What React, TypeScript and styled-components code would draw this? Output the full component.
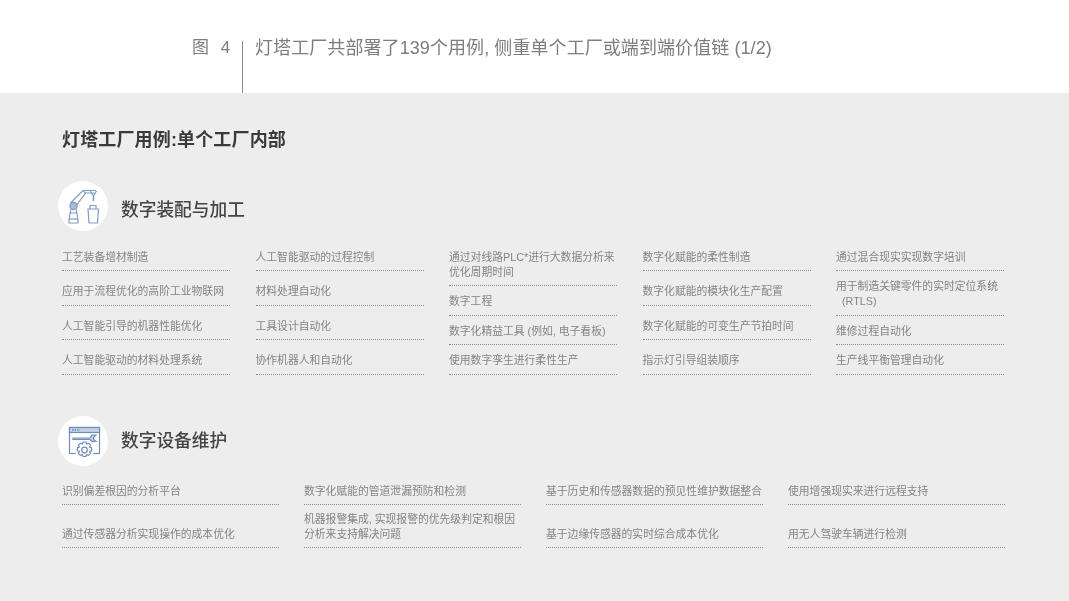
import styled, { createGlobalStyle } from "styled-components";

const GlobalStyle = createGlobalStyle`
  html, body {
    margin: 0;
    padding: 0;
    background: #ededed;
  }
  * {
    box-sizing: border-box;
  }
`;

const Page = styled.div`
  width: 1069px;
  height: 601px;
  overflow: hidden;
  font-family: "Liberation Sans", "Noto Sans CJK SC", sans-serif;
  filter: blur(0.5px);
`;

const Header = styled.header`
  height: 93px;
  background: #fff;
  display: flex;
  padding-left: 192px;
`;

const FigureLabel = styled.div`
  font-size: 17px;
  line-height: 24px;
  margin-top: 36px;
  width: 50px;
  color: #7d7d7d;
  word-spacing: 7px;
`;

const Divider = styled.div`
  width: 1px;
  margin-top: 41px;
  background: #8c8c8c;
`;

const FigureTitle = styled.h1`
  margin: 36px 0 0 12px;
  font-size: 18px;
  line-height: 24px;
  font-weight: 400;
  color: #7d7d7d;
  letter-spacing: 0.08px;
`;

const Panel = styled.main`
  height: 508px;
  background: #ededed;
  padding: 35px 64px 0 62px;
`;

const PanelTitle = styled.h2`
  margin: 0 0 29px;
  font-size: 18px;
  line-height: 24px;
  font-weight: 700;
  color: #3a3a3a;
  letter-spacing: 0.15px;
`;

const SectionHead = styled.div`
  display: flex;
  align-items: center;
  gap: 13px;
  margin-left: -4px;
`;

const IconCircle = styled.div`
  width: 50px;
  height: 50px;
  border-radius: 50%;
  background: #fff;
  flex: none;

  svg {
    display: block;
  }
`;

const SectionTitle = styled.h3<{ $shift: number }>`
  margin: 0;
  font-size: 17.7px;
  line-height: 24px;
  font-weight: 500;
  color: #444;
  transform: translateY(${(p) => p.$shift}px);
`;

const FiveColumns = styled.div`
  display: grid;
  grid-template-columns: repeat(5, 168px);
  column-gap: 25.5px;
  height: 131px;
  margin: 13px 0 41px;
`;

const Column = styled.div`
  display: flex;
  flex-direction: column;
  justify-content: space-between;
`;

const FourColumns = styled.div`
  display: grid;
  grid-template-columns: repeat(4, 217px);
  grid-template-rows: auto auto;
  grid-auto-flow: column;
  column-gap: 25px;
  row-gap: 1px;
  align-items: end;
  margin-top: 12px;
`;

const Item = styled.div`
  padding: 5px 0 6px;
  border-bottom: 1px dotted #8f8f8f;
  font-size: 10.8px;
  line-height: 15px;
  color: #848484;

  /* CJK glyphs sit high against the Liberation strut */
  & > span:first-child {
    position: relative;
    top: 0.5px;
  }
`;

const ItemText = styled.span`
  display: block;
`;

const Indented = styled.span`
  display: block;
  padding-left: 6px;
`;

function RobotIcon() {
  return (
    <svg width="50" height="50" viewBox="0 0 50 50" fill="none" stroke="#7f9bc6" strokeWidth="1.2">
      <path d="M11 42h9v-2l-1-8h-7l-1 8z" />
      <path d="M11 38h9" />
      <circle cx="15.5" cy="25" r="3.6" fill="#a9bcdb" />
      <path d="M12.5 22L25 9.5l2.5 2.5L18 25" />
      <path d="M12.5 28.5v3.5M18.5 28.5v3.5" />
      <path d="M25 9.5h13M27.5 12h9" />
      <path d="M32 10l3.5 5 3-5" />
      <path d="M35.5 15v5" strokeWidth="1.6" />
      <path d="M32 28v-3.5h6V28" />
      <path d="M30 28h10.5l-1 14h-8.5z" />
    </svg>
  );
}

function MaintenanceIcon() {
  return (
    <svg width="50" height="50" viewBox="0 0 50 50" fill="none" stroke="#6f8dbd" strokeWidth="1.2">
      <rect x="11.5" y="11.5" width="30" height="26" />
      <rect x="11.5" y="11.5" width="30" height="5" fill="#c4d1e6" />
      <path d="M14 14h8" strokeWidth="1.6" strokeDasharray="1.5 1" />
      <path d="M15 22h17l2-3h4l-2.5 2.5 0 2 2.5 2h-4l-2-2H15z" fill="#c4d1e6" />
      <circle cx="26.5" cy="34" r="9.5" fill="#fff" stroke="none" />
      <circle cx="26.5" cy="34" r="2.8" />
      <path d="M25 26h3l.5 2 2-.8 2 2-.9 1.9 2 .7v3l-2 .6.9 2-2 2-2-.9-.5 2h-3l-.6-2-2 .9-2-2 .9-2-2-.6v-3l2-.7-.9-1.9 2-2 2 .8z" />
    </svg>
  );
}

const assemblyColumns: string[][] = [
  ["工艺装备增材制造", "应用于流程优化的高阶工业物联网", "人工智能引导的机器性能优化", "人工智能驱动的材料处理系统"],
  ["人工智能驱动的过程控制", "材料处理自动化", "工具设计自动化", "协作机器人和自动化"],
  ["通过对线路PLC*进行大数据分析来优化周期时间", "数字工程", "数字化精益工具 (例如, 电子看板)", "使用数字孪生进行柔性生产"],
  ["数字化赋能的柔性制造", "数字化赋能的模块化生产配置", "数字化赋能的可变生产节拍时间", "指示灯引导组装顺序"],
  ["通过混合现实实现数字培训", "用于制造关键零件的实时定位系统", "维修过程自动化", "生产线平衡管理自动化"],
];

const maintenanceItems: string[] = [
  "识别偏差根因的分析平台",
  "通过传感器分析实现操作的成本优化",
  "数字化赋能的管道泄漏预防和检测",
  "机器报警集成, 实现报警的优先级判定和根因分析来支持解决问题",
  "基于历史和传感器数据的预见性维护数据整合",
  "基于边缘传感器的实时综合成本优化",
  "使用增强现实来进行远程支持",
  "用无人驾驶车辆进行检测",
];

export default function App() {
  return (
    <Page>
      <GlobalStyle />
      <Header>
        <FigureLabel>图 4</FigureLabel>
        <Divider />
        <FigureTitle>灯塔工厂共部署了139个用例, 侧重单个工厂或端到端价值链 (1/2)</FigureTitle>
      </Header>
      <Panel>
        <PanelTitle>灯塔工厂用例:单个工厂内部</PanelTitle>
        <SectionHead>
          <IconCircle>
            <RobotIcon />
          </IconCircle>
          <SectionTitle $shift={4}>数字装配与加工</SectionTitle>
        </SectionHead>
        <FiveColumns>
          {assemblyColumns.map((items, col) => (
            <Column key={col}>
              {items.map((text) => (
                <Item key={text}>
                  <ItemText>{text}</ItemText>
                  {text.endsWith("定位系统") && <Indented>(RTLS)</Indented>}
                </Item>
              ))}
            </Column>
          ))}
        </FiveColumns>
        <SectionHead>
          <IconCircle>
            <MaintenanceIcon />
          </IconCircle>
          <SectionTitle $shift={0}>数字设备维护</SectionTitle>
        </SectionHead>
        <FourColumns>
          {maintenanceItems.map((text) => (
            <Item key={text}>
              <ItemText>{text}</ItemText>
            </Item>
          ))}
        </FourColumns>
      </Panel>
    </Page>
  );
}
